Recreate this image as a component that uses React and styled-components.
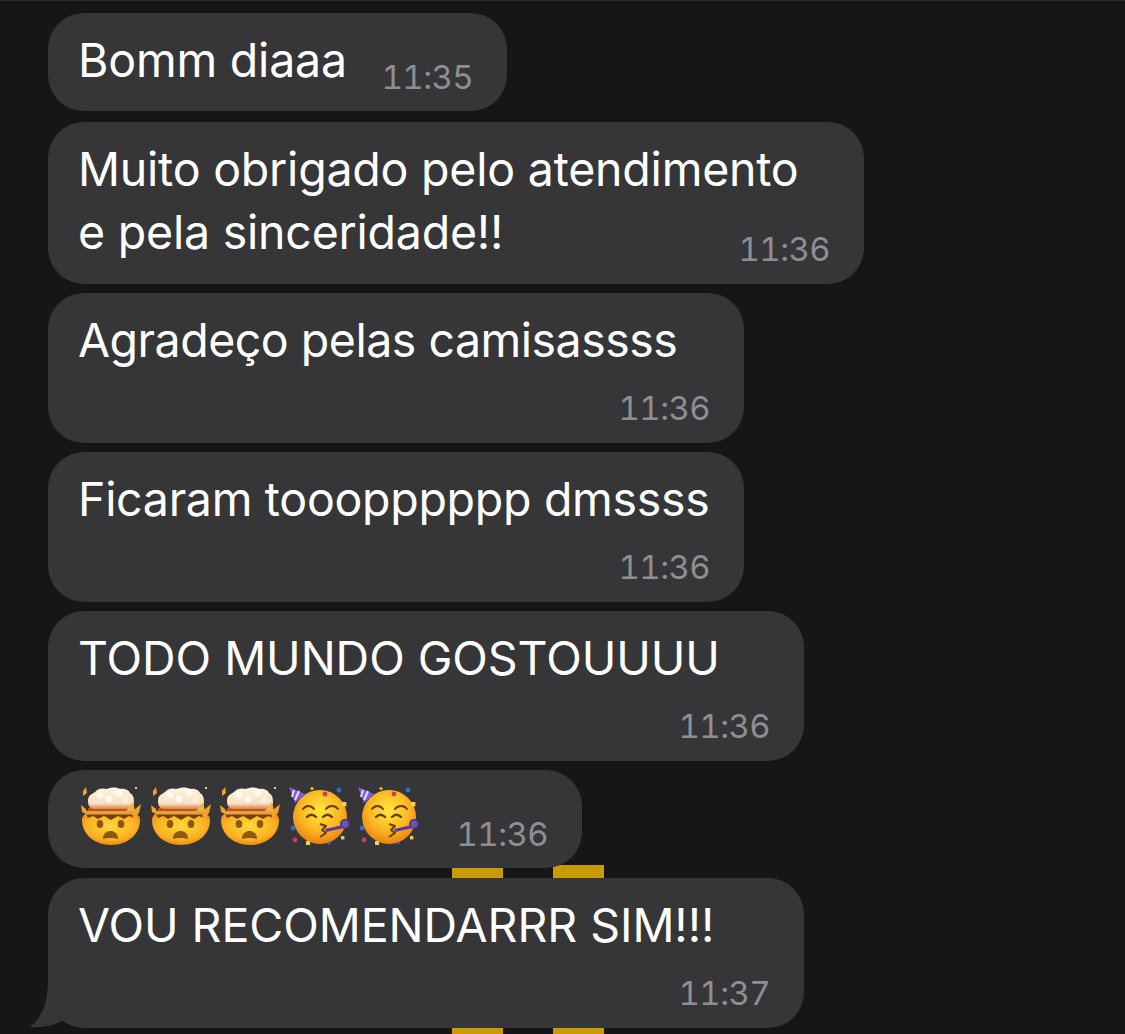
import React from 'react';
import styled, { createGlobalStyle } from 'styled-components';

const Global = createGlobalStyle`
  html, body { margin: 0; padding: 0; background: #161616; }
  body { font-family: Inter, "Liberation Sans", sans-serif; overflow: hidden; }
`

const Screen = styled.div`
  position: relative;
  width: 1125px;
  height: 1034px;
  overflow: hidden;
  background: #161616;
  border-top: 1px solid #2b2b2c;
  box-sizing: border-box;
`
const Stripe = styled.div`
  position: absolute;
  left: ${({left}) => left}px;
  top: 864px;
  width: 51px;
  height: 170px;
  background: #c99b06;
`
const List = styled.div`
  position: relative;
  display: flex;
  flex-direction: column;
  align-items: flex-start;
  padding: 12px 0 0 48px;
`
const Bubble = styled.div`
  position: relative;
  box-sizing: border-box;
  display: flex;
  flex-direction: column;
  width: ${({width}) => width}px;
  margin-top: ${({gap}) => gap}px;
  padding: 16px 34px ${({tight}) => tight ? 16 : 17}px 30px;
  background: #363638;
  border-radius: 36px;
  color: #fff;
`
const Line = styled.div`
  align-self: flex-start;
  font-size: 46.5px;
  line-height: 63px;
  letter-spacing: ${({tracking}) => tracking}px;
  white-space: nowrap;
`
const Time = styled.div`
  align-self: flex-end;
  margin-top: ${({inline}) => inline ? -33 : 18}px;
  font-size: 33px;
  line-height: 36px;
  font-variant-numeric: tabular-nums;
  letter-spacing: -0.6px;
  color: #8e8e93;
`
const Emojis = styled.div`
  display: flex;
  gap: 9.5px;
  height: 63px;
  margin-left: 4px;
  padding-top: 1px;
  box-sizing: border-box;
`
const EmojiSvg = styled.svg`
  width: 60px;
  height: 60px;
  overflow: visible;
  filter: blur(0.4px);
`
const Tail = styled.svg`
  position: absolute;
  left: -20px;
  bottom: -1px;
  width: 50px;
  height: 50px;
`

const MindBlown = () => (
  <EmojiSvg viewBox="0 0 60 60">
    <defs>
      <radialGradient id="faceA" cx="50%" cy="40%" r="62%">
        <stop offset="0%" stopColor="#ffd93b" />
        <stop offset="70%" stopColor="#fbb021" />
        <stop offset="100%" stopColor="#e98515" />
      </radialGradient>
      <linearGradient id="brain" x1="0" y1="0" x2="0" y2="1">
        <stop offset="0%" stopColor="#fff4de" />
        <stop offset="75%" stopColor="#f6e0c4" />
        <stop offset="100%" stopColor="#d8823f" />
      </linearGradient>
    </defs>
    <path d="M0 33 C0 29 3 26 7 26 L51 26 C55 26 58 29 58 33 C58 47 46 58 29 58 C12 58 0 47 0 33Z" fill="url(#faceA)" />
    <path d="M4 27 L54 27 L52 31 L47 29 L42 32 L36 29 L29 33 L22 29 L16 32 L11 29 L6 31Z" fill="#7b3f0c" />
    <path d="M6 21 L52 21 L53 25 L6 25Z" fill="#c4501f" />
    <path d="M5 24 L53 24 L53 27.5 L5 27.5Z" fill="#e4a23b" />
    <path d="M6 14 C6 8 10 7 13 5 C16 1 21 1 25 2 C29 0 35 0 38 2 C42 1 47 3 48 6 C51 8 52 10 52 15 C52 19 50 22 46 22 L12 22 C8 22 6 19 6 14Z" fill="url(#brain)" />
    <circle cx="18" cy="8" r="3.6" fill="#fffaf0" />
    <circle cx="37" cy="6" r="3.8" fill="#fffaf0" />
    <circle cx="27" cy="12" r="3.6" fill="#fffaf0" />
    <circle cx="43" cy="13" r="3" fill="#fbeedd" />
    <path d="M50 25 L59 17 L57 26 L51 32Z" fill="#f2a427" />
    <path d="M44 24 L51 15 L53 24Z" fill="#f6b23c" />
    <path d="M-1 18 L4 22 L6 28 L0 25Z" fill="#f2a427" />
    <path d="M1 4 L4 0 L5 6 L1 9Z" fill="#f2a427" />
    <rect x="53" y="0" width="2" height="2" fill="#e8d6a0" />
    <ellipse cx="18" cy="37" rx="3.3" ry="4" fill="#8a5a10" />
    <ellipse cx="39" cy="37" rx="3.3" ry="4" fill="#8a5a10" />
    <path d="M21 52 C21 46 25 44 28.5 44 C32 44 36 46 36 52 C32 50.5 25 50.5 21 52Z" fill="#8a5a10" />
  </EmojiSvg>
)

const PartyFace = ({id}) => (
  <EmojiSvg viewBox="0 0 60 60">
    <defs>
      <radialGradient id={id} cx="50%" cy="38%" r="60%">
        <stop offset="0%" stopColor="#ffe83f" />
        <stop offset="62%" stopColor="#fcb722" />
        <stop offset="100%" stopColor="#ec8716" />
      </radialGradient>
    </defs>
    <circle cx="29" cy="30" r="27" fill={`url(#${id})`} />
    <path d="M-2 0 L14 7 L4 16Z" fill="#7f5ce0" />
    <path d="M3 3 L1 10 M8 4 L4 13" stroke="#e6ddfb" strokeWidth="2" />
    <circle cx="34" cy="7" r="2.4" fill="#d8365e" />
    <circle cx="48" cy="3" r="2.4" fill="#3a6bc4" />
    <circle cx="21" cy="1.5" r="1.6" fill="#f0c020" />
    <rect x="51" y="15" width="4.4" height="4.4" fill="#f4d34a" />
    <circle cx="2" cy="41" r="2.4" fill="#3a6bc4" />
    <circle cx="4" cy="53" r="2.4" fill="#c93b68" />
    <rect x="15" y="54" width="4" height="4" fill="#f4d34a" />
    <circle cx="38" cy="56" r="1.6" fill="#3a6bc4" />
    <rect x="50" y="49" width="3.4" height="3.4" fill="#e8c76a" />
    <path d="M12 22 C15 18 20 18 23 22 M35 22 C38 18 44 18 47 22" fill="none" stroke="#6b3d0c" strokeWidth="2" strokeLinecap="round" />
    <path d="M16 30 C19 27 22 27 25 30 M32 30 C35 27 38 27 41 30" fill="none" stroke="#6b3d0c" strokeWidth="2.4" strokeLinecap="round" />
    <path d="M29 37 L35 39 L31 43 L35 46 L29 50" fill="none" stroke="#6b3d0c" strokeWidth="2" strokeLinejoin="round" />
    <path d="M34 42 L52 38 L53 41 L35 45Z" fill="#5b3a9c" />
    <circle cx="54" cy="37" r="4.2" fill="#6a55b0" stroke="#4a3690" strokeWidth="1.6" />
  </EmojiSvg>
)

const messages = [
  { text: 'Bomm diaaa', time: '11:35', width: 459, gap: 0, inline: true, tight: true, tracking: -0.2 },
  { text: 'Muito obrigado pelo atendimento\ne pela sinceridade!!', time: '11:36', width: 816, gap: 11, inline: true, tracking: -0.22 },
  { text: 'Agradeço pelas camisassss', time: '11:36', width: 696, gap: 9, tracking: -0.5 },
  { text: 'Ficaram tooopppppp dmssss', time: '11:36', width: 696, gap: 9, tracking: -0.3 },
  { text: 'TODO MUNDO GOSTOUUUU', time: '11:36', width: 756, gap: 9, tracking: -0.05 },
  { emoji: true, time: '11:36', width: 534, gap: 9, inline: true, tight: true },
  { text: 'VOU RECOMENDARRR SIM!!!', time: '11:37', width: 756, gap: 10, tail: true, tracking: -0.05 },
]

const App = () => {
  return (
    <Screen>
      <Global />
      <Stripe left={452} />
      <Stripe left={553} />
      <List>
        {messages.map((m, i) => (
          <Bubble key={i} width={m.width} gap={m.gap} tight={m.tight}>
            {m.emoji ? (
              <Emojis>
                <MindBlown />
                <MindBlown />
                <MindBlown />
                <PartyFace id="partyA" />
                <PartyFace id="partyB" />
              </Emojis>
            ) : (
              m.text.split('\n').map((l) => <Line key={l} tracking={m.tracking}>{l}</Line>)
            )}
            <Time inline={m.inline}>{m.time}</Time>
            {m.tail && (
              <Tail viewBox="0 0 50 50">
                <path d="M20 0 C20 22 15 38 2 48 C13 49 24 47 34 42 L50 20 L50 0Z" fill="#363638" />
              </Tail>
            )}
          </Bubble>
        ))}
      </List>
    </Screen>
  );
};

export default App;
